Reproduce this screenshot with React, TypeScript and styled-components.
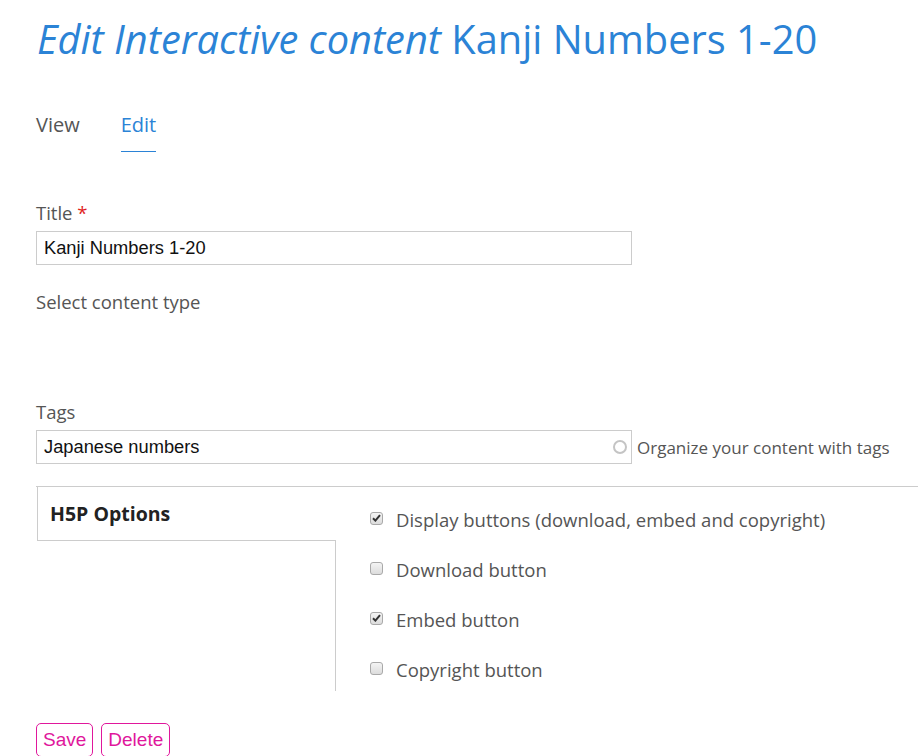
import React from "react";
import styled, { createGlobalStyle } from "styled-components";

const GlobalStyle = createGlobalStyle`
  html, body {
    margin: 0;
    padding: 0;
    background: #ffffff;
    overflow: hidden;
  }
  body {
    font-family: "Open Sans", "Noto Sans", sans-serif;
    color: #555555;
  }
`;

const Page = styled.div`
  padding: 0 0 0 36px;
  box-sizing: border-box;
`;

const Heading = styled.h1`
  margin: 14px 0 0 1px;
  font-family: "Open Sans", sans-serif;
  font-weight: 400;
  font-size: 39.8px;
  line-height: 50px;
  color: #2b83d6;
  white-space: nowrap;
  em {
    font-style: italic;
  }
`;

const Tabs = styled.nav`
  display: flex;
  gap: 41px;
  margin-top: 49px;
`;

const Tab = styled.a<{ $active?: boolean }>`
  font-size: 20px;
  line-height: 24px;
  padding-bottom: 14px;
  color: ${(p) => (p.$active ? "#2b83d6" : "#555555")};
  border-bottom: 1px solid ${(p) => (p.$active ? "#2b83d6" : "transparent")};
  text-decoration: none;
`;

const Field = styled.div<{ $top: number }>`
  margin-top: ${(p) => p.$top}px;
`;

const Label = styled.div`
  font-size: 18.5px;
  line-height: 24px;
  color: #555555;
  margin-bottom: 6px;
`;

const Required = styled.span`
  color: #e01e1e;
`;

const InputRow = styled.div`
  display: flex;
  align-items: center;
  gap: 5px;
`;

const InputBox = styled.div`
  position: relative;
  flex-shrink: 0;
  width: 596px;
  height: 34px;
  box-sizing: border-box;
  border: 1px solid #cccccc;
  display: flex;
  align-items: center;
  padding: 0 7px;
  font-family: "Liberation Sans", Arial, sans-serif;
  font-size: 18.3px;
  color: #111111;
`;

const Spinner = styled.span`
  position: absolute;
  right: 4px;
  top: 50%;
  width: 10px;
  height: 10px;
  margin-top: -7px;
  border: 2px solid #c4c4c4;
  border-radius: 50%;
`;

const Hint = styled.span`
  font-size: 17px;
  color: #555555;
  white-space: nowrap;
`;

const PlainLabel = styled.div`
  font-size: 18.5px;
  line-height: 24px;
  color: #555555;
`;

const VerticalTabs = styled.div`
  margin-top: 22px;
  width: 900px;
  border-top: 1px solid #cccccc;
  display: grid;
  grid-template-columns: 300px 1fr;
`;

const TabMenu = styled.div`
  display: flex;
  flex-direction: column;
`;

const TabItem = styled.div`
  margin-left: 1px;
  border-left: 1px solid #cccccc;
  border-bottom: 1px solid #cccccc;
  display: flex;
  align-items: center;
  padding-left: 12px;
  font-weight: 700;
  font-size: 19.5px;
  color: #222222;
  box-sizing: border-box;
  height: 54px;
`;

const TabFill = styled.div`
  flex: 1;
  border-right: 1px solid #cccccc;
`;

const Pane = styled.div`
  padding: 20px 0 10px 34px;
  display: flex;
  flex-direction: column;
  gap: 26px;
`;

const CheckRow = styled.label`
  display: flex;
  align-items: center;
  gap: 13px;
  height: 24px;
  font-size: 18.5px;
  color: #555555;
  white-space: nowrap;
`;

const Box = styled.span`
  width: 13px;
  height: 13px;
  box-sizing: border-box;
  border: 1px solid #a9a9a9;
  border-radius: 3px;
  background: linear-gradient(#f4f4f4, #dcdcdc);
  display: inline-flex;
  align-items: center;
  justify-content: center;
  margin-top: -2px;
`;

const Actions = styled.div`
  display: flex;
  gap: 8px;
  margin-top: 32px;
`;

const Button = styled.button`
  font-family: "Liberation Sans", Arial, sans-serif;
  font-size: 19px;
  color: #e0179c;
  background: #ffffff;
  border: 1px solid #e0179c;
  border-radius: 5px;
  padding: 0 6px;
  height: 34px;
  line-height: 32px;
`;

const Check = ({ checked }: { checked: boolean }) => (
  <Box>
    {checked && (
      <svg width="9" height="8" viewBox="0 0 9 8">
        <path d="M1 4.2 L3.4 6.6 L8 1.2" fill="none" stroke="#333" strokeWidth="2" />
      </svg>
    )}
  </Box>
);

const options = [
  { label: "Display buttons (download, embed and copyright)", checked: true },
  { label: "Download button", checked: false },
  { label: "Embed button", checked: true },
  { label: "Copyright button", checked: false },
];

export default function App() {
  return (
    <Page>
      <GlobalStyle />
      <Heading>
        <em>Edit Interactive content</em> Kanji Numbers 1-20
      </Heading>
      <Tabs>
        <Tab>View</Tab>
        <Tab $active>Edit</Tab>
      </Tabs>
      <Field $top={49}>
        <Label>
          Title <Required>*</Required>
        </Label>
        <InputBox>Kanji Numbers 1-20</InputBox>
      </Field>
      <Field $top={25}>
        <PlainLabel>Select content type</PlainLabel>
      </Field>
      <Field $top={86}>
        <Label>Tags</Label>
        <InputRow>
          <InputBox>
            Japanese numbers
            <Spinner />
          </InputBox>
          <Hint>Organize your content with tags</Hint>
        </InputRow>
      </Field>
      <VerticalTabs>
        <TabMenu>
          <TabItem>H5P Options</TabItem>
          <TabFill />
        </TabMenu>
        <Pane>
          {options.map((o) => (
            <CheckRow key={o.label}>
              <Check checked={o.checked} />
              {o.label}
            </CheckRow>
          ))}
        </Pane>
      </VerticalTabs>
      <Actions>
        <Button>Save</Button>
        <Button>Delete</Button>
      </Actions>
    </Page>
  );
}
